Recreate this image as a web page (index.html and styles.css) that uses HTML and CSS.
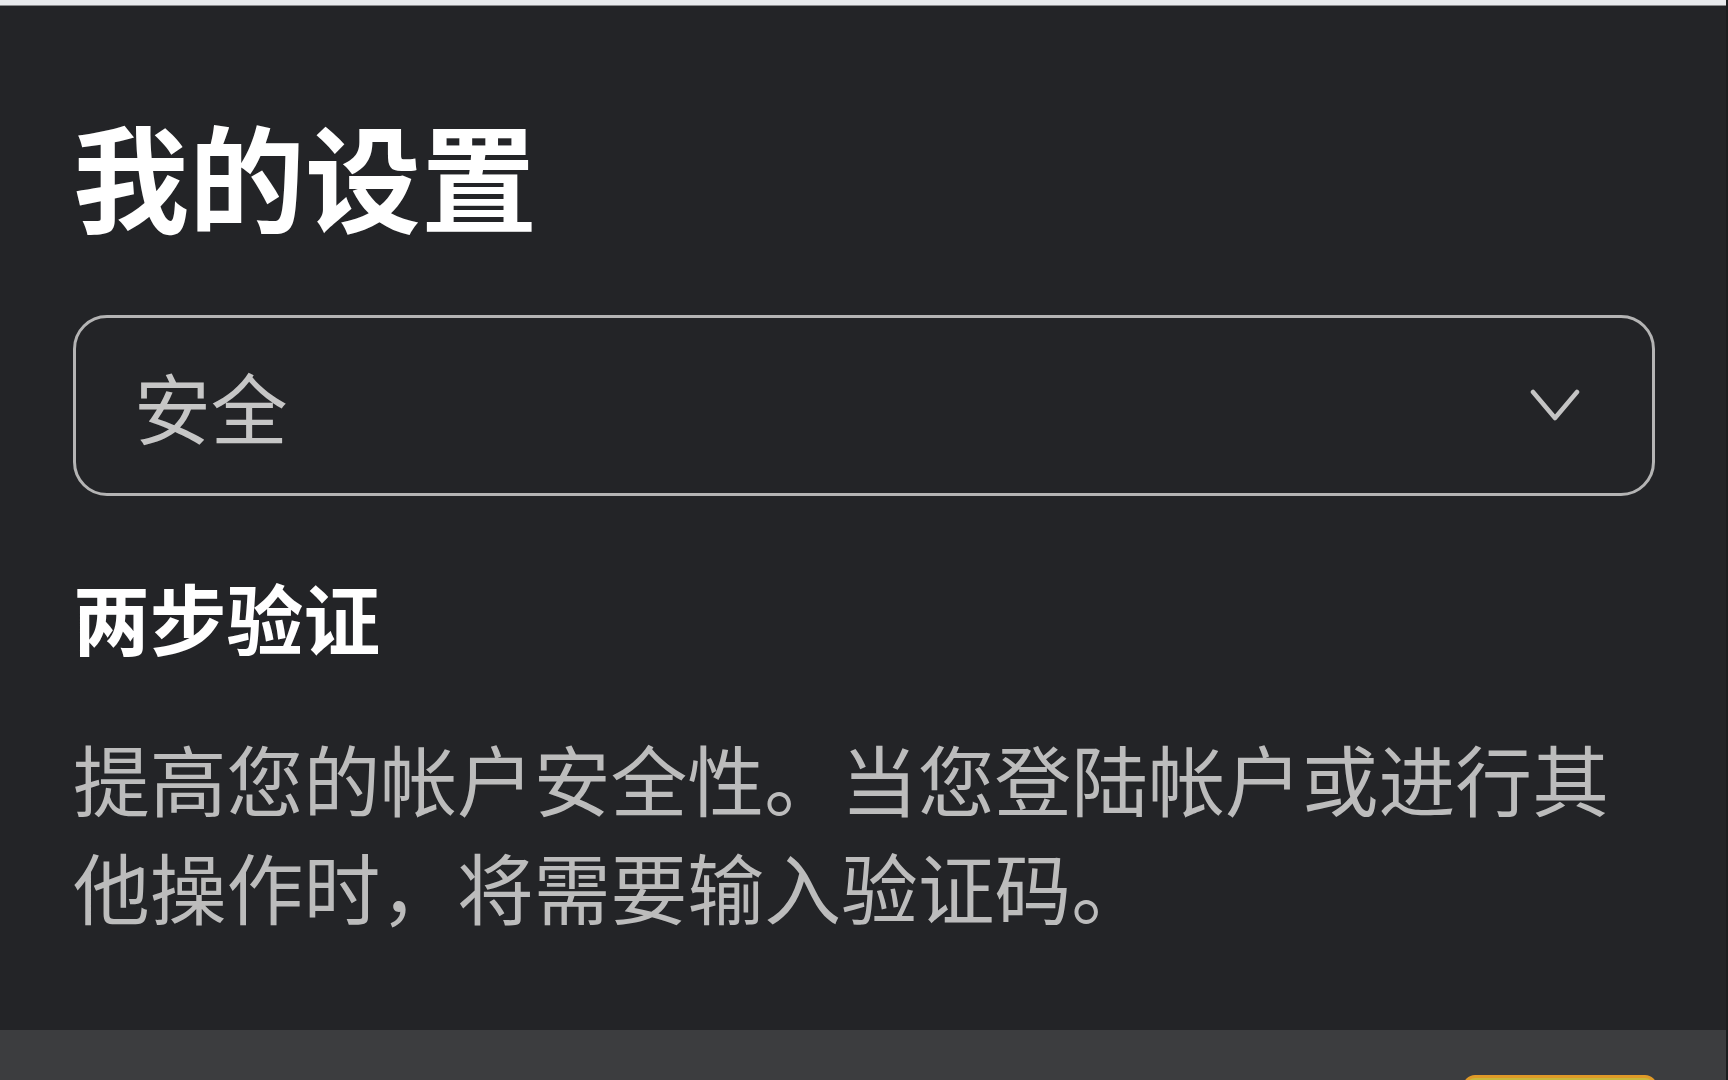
FILE: index.html
```html
<!DOCTYPE html>
<html lang="zh-CN">
<head>
<meta charset="utf-8">
<title>我的设置</title>
<link rel="stylesheet" href="styles.css">
</head>
<body>
<div class="app">
  <div class="topbar"></div>
  <main class="content">
    <h1 class="title">我的设置</h1>
    <div class="select">
      <span class="select-value">安全</span>
      <svg class="chevron" viewBox="0 0 50 36" width="50" height="36" aria-hidden="true">
        <path d="M3 4 L25 30 L47 4" fill="none" stroke="#c4c4c4" stroke-width="4.5" stroke-linecap="round" stroke-linejoin="round"/>
      </svg>
    </div>
    <h2 class="section-title">两步验证</h2>
    <p class="section-desc">提高您的帐户安全性。当您登陆帐户或进行其他操作时，将需要输入验证码。</p>
  </main>
  <footer class="footer">
    <button class="primary-btn" type="button" aria-label="启用"></button>
  </footer>
</div>
</body>
</html>
```

FILE: styles.css
```css
* { box-sizing: border-box; }
html, body { margin: 0; padding: 0; }
body {
  width: 1728px;
  height: 1080px;
  overflow: hidden;
  background: #232427;
  font-family: "Noto Sans CJK SC", "Noto Sans", sans-serif;
}
.app {
  height: 1080px;
  display: flex;
  flex-direction: column;
  border-right: 2px solid #1c1d1f;
}
.topbar {
  height: 6px;
  flex: none;
  background: #e8eaed;
  border-bottom: 1px solid #8b8c8e;
}
.content {
  flex: 1;
  padding: 0 71px 0 73px;
}
.title {
  margin: 87px 0 0;
  font-size: 116px;
  line-height: 161px;
  font-weight: 700;
  color: #ffffff;
}
.select {
  margin-top: 61px;
  height: 181px;
  border: 3px solid #b4b4b4;
  border-radius: 34px;
  display: flex;
  align-items: center;
  justify-content: space-between;
  padding: 0 72px 0 58px;
}
.select-value {
  font-size: 76.8px;
  line-height: 108px;
  color: #c6c6c6;
}
.chevron { display: block; width: 50px; height: 36px; }
.section-title {
  margin: 67px 0 0;
  font-size: 76.8px;
  line-height: 108px;
  font-weight: 700;
  color: #ffffff;
}
.section-desc {
  margin: 53px 0 0;
  font-size: 76.8px;
  line-height: 108px;
  color: #bcbcbc;
}
.footer {
  height: 50px;
  flex: none;
  background: #3c3d3f;
  overflow: hidden;
  display: flex;
  justify-content: flex-end;
  padding: 45px 69px 0 0;
}
.primary-btn {
  width: 194px;
  height: 180px;
  flex: none;
  border: 3px solid #e09a28;
  border-radius: 12px;
  background: #c9b93c;
  padding: 0;
}
```
